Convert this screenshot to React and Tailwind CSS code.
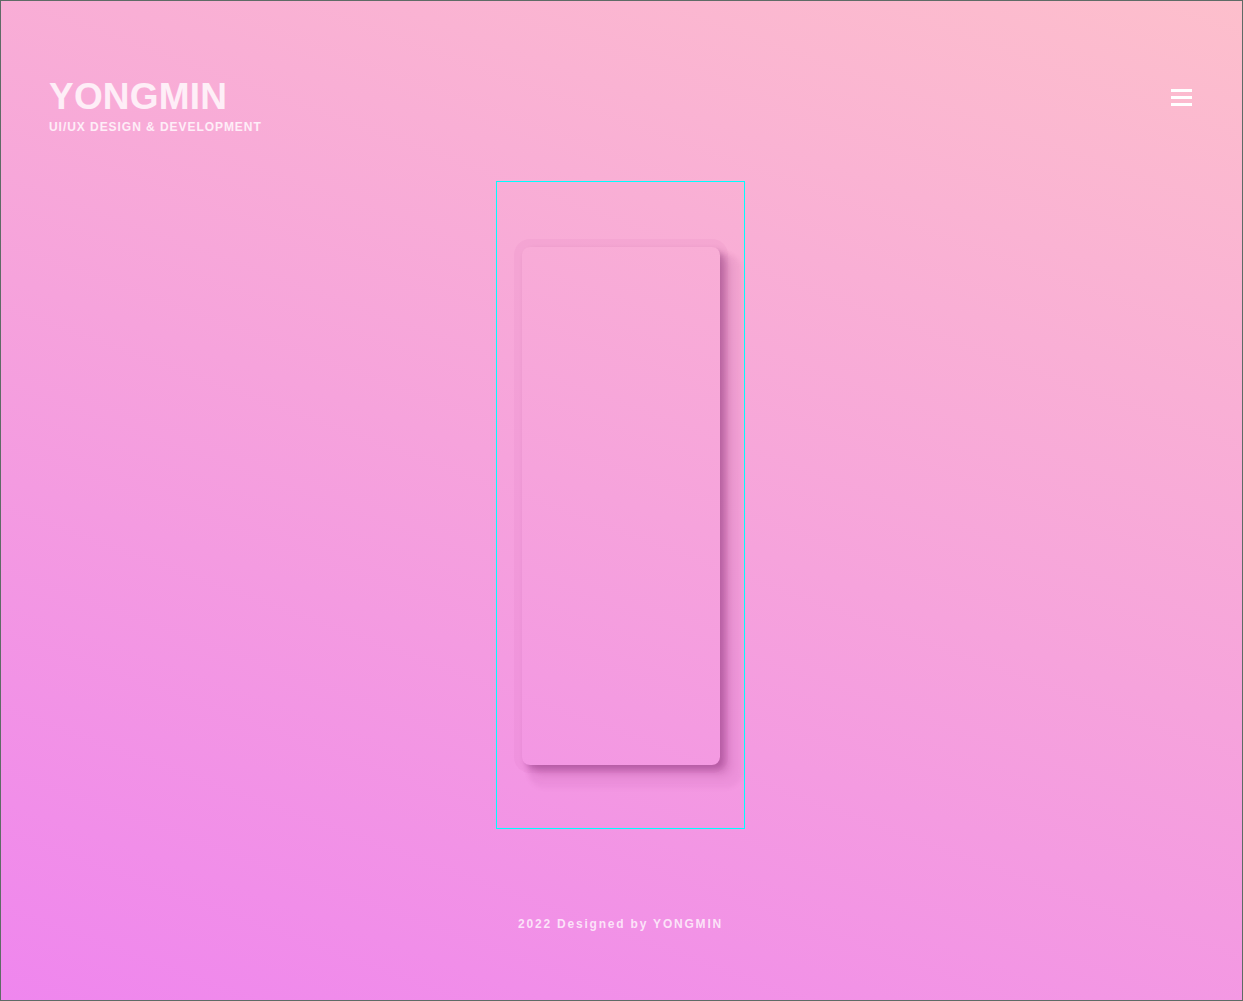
const App = () => {
  return (
    <div
      className="h-screen w-full border border-[#5f6b66] bg-[linear-gradient(20deg,#ef86ee_0%,#f6a3dc_50%,#fdbfcc_100%)] font-['Liberation_Sans',Arial,sans-serif] text-white overflow-hidden"
    >
      {/* Header */}
      <header className="flex items-start justify-between pl-[48px] pr-[50px] pt-[76px]">
        <div>
          <h1 className="text-[37px] font-bold leading-[40px] tracking-[0.2px] text-white/80">YONGMIN</h1>
          <p className="mt-[3px] text-[12px] font-bold leading-[14px] tracking-[0.95px] text-white/80">
            UI/UX DESIGN &amp; DEVELOPMENT
          </p>
        </div>
        <button className="mt-[12px] flex w-[21px] flex-col gap-[4px]">
          <span className="h-[3px] w-full bg-white" />
          <span className="h-[3px] w-full bg-white" />
          <span className="h-[3px] w-full bg-white" />
        </button>
      </header>

      {/* Card */}
      <main className="mt-[47px] flex justify-center">
        <div className="ml-[-3px] flex h-[648px] w-[249px] justify-start border border-[#00ffff] pl-[25px] pt-[65px]">
          <div className="h-[518px] w-[198px] rounded-[8px] bg-transparent shadow-[0_0_0_8px_rgba(190,70,150,0.06),4px_4px_6px_rgba(100,20,90,0.3),10px_10px_10px_rgba(120,30,100,0.18),14px_15px_4px_8px_rgba(170,60,140,0.08)]" />
        </div>
      </main>

      {/* Footer */}
      <footer className="mt-[86px] pr-[2px] text-center">
        <p className="text-[12px] font-bold tracking-[1.8px] text-white/75">2022 Designed by YONGMIN</p>
      </footer>
    </div>
  );
};

export default App;
